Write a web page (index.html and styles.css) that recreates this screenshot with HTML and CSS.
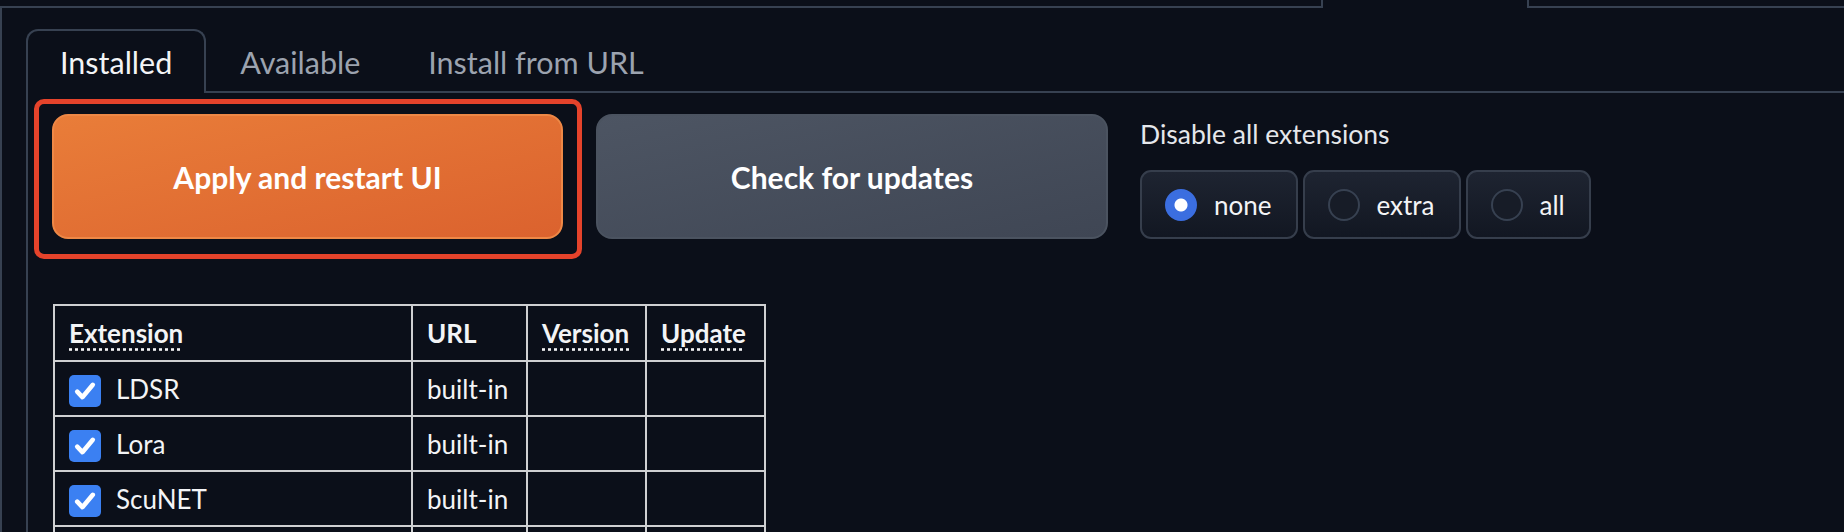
FILE: index.html
```html
<!DOCTYPE html>
<html lang="en">
  <head>
    <meta charset="UTF-8" />
    <meta name="viewport" content="width=device-width, initial-scale=1.0" />
    <title>Extensions</title>
    <link rel="stylesheet" href="styles.css">
  </head>
  <body>
    <div class="top-tabs">
      <div class="top-line top-start"></div>
      <div class="top-selected"></div>
      <div class="top-line top-rest"></div>
    </div>

    <div class="outer-panel">
      <div class="tab-nav">
        <button class="tab selected">Installed</button>
        <button class="tab">Available</button>
        <button class="tab">Install from URL</button>
      </div>

      <div class="tab-panel">
        <div class="controls">
          <div class="apply-wrap">
            <button class="btn btn-primary" id="applyButton">Apply and restart UI</button>
          </div>
          <button class="btn btn-secondary" id="checkButton">Check for updates</button>

          <div class="disable-block">
            <span class="block-label">Disable all extensions</span>
            <div class="radio-group">
              <label class="radio-item">
                <input type="radio" name="disable_all" value="none" checked />
                <span>none</span>
              </label>
              <label class="radio-item">
                <input type="radio" name="disable_all" value="extra" />
                <span>extra</span>
              </label>
              <label class="radio-item">
                <input type="radio" name="disable_all" value="all" />
                <span>all</span>
              </label>
            </div>
          </div>
        </div>

        <table class="ext-table">
          <colgroup>
            <col class="col-name" />
            <col class="col-url" />
            <col class="col-version" />
            <col class="col-update" />
          </colgroup>
          <thead>
            <tr>
              <th><abbr title="Use checkbox to enable the extension">Extension</abbr></th>
              <th>URL</th>
              <th><abbr title="Extension version">Version</abbr></th>
              <th><abbr title="Use checkbox to mark the extension for update">Update</abbr></th>
            </tr>
          </thead>
          <tbody>
            <tr>
              <td><label class="ext-name"><input type="checkbox" checked /><span>LDSR</span></label></td>
              <td>built-in</td>
              <td></td>
              <td></td>
            </tr>
            <tr>
              <td><label class="ext-name"><input type="checkbox" checked /><span>Lora</span></label></td>
              <td>built-in</td>
              <td></td>
              <td></td>
            </tr>
            <tr>
              <td><label class="ext-name"><input type="checkbox" checked /><span>ScuNET</span></label></td>
              <td>built-in</td>
              <td></td>
              <td></td>
            </tr>
            <!-- next row is below the fold -->
            <tr>
              <td></td>
              <td></td>
              <td></td>
              <td></td>
            </tr>
          </tbody>
        </table>
      </div>
    </div>
  </body>
</html>
```

FILE: styles.css
```css
html,
body {
  height: 532px;
  overflow: hidden;
}

body {
  margin: 0;
  padding: 0;
  background: #0b0f19;
  color: #f3f4f6;
  font-family: Lato, "Noto Sans", sans-serif;
}

/* strip of the outer tab bar that is cut off at the top */
.top-tabs {
  display: flex;
  height: 8px;
}

.top-line {
  border-bottom: 2px solid #374151;
}

.top-start {
  width: 1321px;
}

.top-selected {
  width: 204px;
  border-left: 2px solid #374151;
  border-right: 2px solid #374151;
}

.top-rest {
  flex: 1;
}

.outer-panel {
  border-left: 2px solid #374151;
  padding: 21px 0 0 24px;
  height: 600px;
}

/* inner tabs */
.tab-nav {
  display: flex;
  border-bottom: 2px solid #374151;
}

.tab {
  height: 64px;
  margin-bottom: -2px;
  padding: 0 32px;
  border: 2px solid transparent;
  border-bottom: none;
  border-radius: 12px 12px 0 0;
  background: transparent;
  color: #9ca3af;
  font-family: inherit;
  font-size: 30.5px;
  cursor: pointer;
}

.tab.selected {
  border-color: #374151;
  background: #0b0f19;
  color: #f3f4f6;
}

.tab-panel {
  border-left: 2px solid #374151;
  padding: 21px 0 0 24px;
  height: 500px;
}

/* buttons + radio row */
.controls {
  display: flex;
  align-items: flex-start;
  gap: 33px;
}

.apply-wrap {
  position: relative;
}

/* red highlight drawn around the apply button */
.apply-wrap::after {
  content: "";
  position: absolute;
  top: -15px;
  left: -18px;
  right: -19px;
  bottom: -20px;
  border: 5px solid #e5432b;
  border-radius: 10px;
  pointer-events: none;
}

.btn {
  width: 512px;
  height: 125px;
  border-radius: 16px;
  font-family: inherit;
  font-size: 30px;
  font-weight: 700;
  color: #fff;
  cursor: pointer;
}

.btn-primary {
  width: 511px;
  background: linear-gradient(to bottom right, #e97d39, #db622e);
  border: 2px solid #ee8846;
}

.btn-secondary {
  background: linear-gradient(to bottom right, #4d5563, #3f4654);
  border: 2px solid #4b5360;
}

.disable-block {
  display: flex;
  flex-direction: column;
  margin-left: -1px;
}

.block-label {
  line-height: 40px;
  margin-bottom: 16px;
  font-size: 26.5px;
  color: #e5e7eb;
}

.radio-group {
  display: flex;
  gap: 5px;
}

.radio-item {
  display: flex;
  align-items: center;
  gap: 17px;
  height: 65px;
  padding: 0 24px 0 23px;
  border: 2px solid #363e4c;
  border-radius: 11px;
  background: linear-gradient(to bottom, #1e2431, #121722);
  font-size: 26px;
  color: #f3f4f6;
  cursor: pointer;
}

.radio-item input {
  appearance: none;
  width: 32px;
  height: 32px;
  margin: 0;
  border: 2px solid #374151;
  border-radius: 50%;
  background: #171c27;
}

.radio-item input:checked {
  border-color: #3b6ee0;
  background: radial-gradient(circle, #fff 0 6px, #3b6ee0 7px);
}

/* extensions table */
.ext-table {
  margin-top: 65px;
  margin-left: 1px;
  border-collapse: collapse;
  table-layout: fixed;
  width: 711px;
  font-size: 26px;
}

.col-name {
  width: 358px;
}

.col-url {
  width: 115px;
}

.col-version {
  width: 119px;
}

.col-update {
  width: 119px;
}

.ext-table th,
.ext-table td {
  border: 2px solid #cfd0d2;
  padding: 0 14px;
  text-align: left;
  white-space: nowrap;
}

.ext-table th {
  height: 54px;
  font-weight: 700;
}

.ext-table td {
  height: 53px;
}

.ext-table abbr {
  text-decoration: underline dotted;
  text-underline-offset: 5px;
}

.ext-name {
  display: flex;
  align-items: center;
  gap: 15px;
}

.ext-name input {
  appearance: none;
  width: 32px;
  height: 32px;
  margin: 4px 0 0;
  border-radius: 5px;
  background: #3b80f2 url("data:image/svg+xml,%3Csvg xmlns='http://www.w3.org/2000/svg' viewBox='0 0 16 16'%3E%3Cpath d='M3.2 8.4l3.2 3.4 6.4-7.6' fill='none' stroke='white' stroke-width='2.8' stroke-linecap='round' stroke-linejoin='round'/%3E%3C/svg%3E") center / 26px 26px no-repeat;
}
```
